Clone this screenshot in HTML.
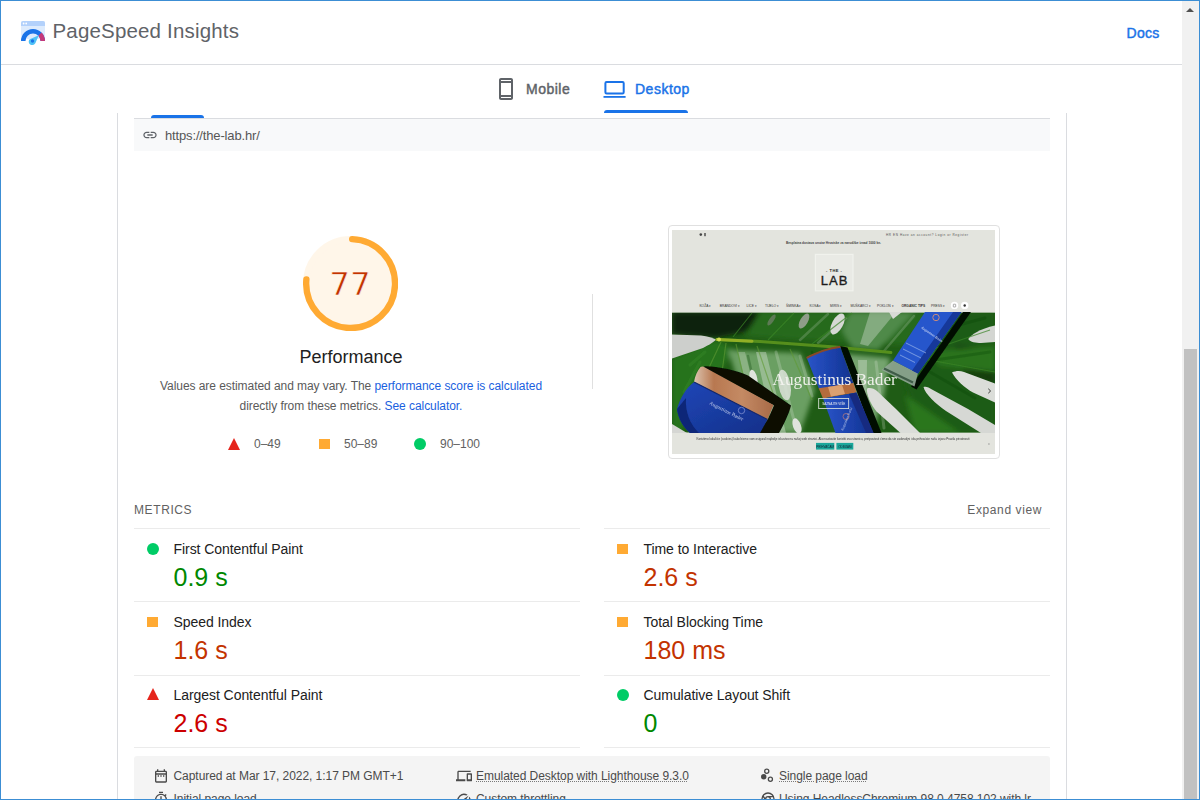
<!DOCTYPE html>
<html lang="en">
<head>
<meta charset="utf-8">
<title>PageSpeed Insights</title>
<style>
html,body{margin:0;padding:0;}
body{width:1200px;height:800px;overflow:hidden;position:relative;background:#fff;font-family:"Liberation Sans",Arial,sans-serif;color:#212121;}
.abs{position:absolute;}
#frame{position:absolute;left:0;top:0;width:1198px;height:798px;border:1px solid #3c8ed4;z-index:50;pointer-events:none;}
/* header */
#hdr-line{left:1px;top:64px;width:1181px;height:1px;background:#dadce0;}
#title{left:52.5px;top:17px;font-size:20.5px;line-height:28px;letter-spacing:0.17px;color:#5f6368;white-space:nowrap;}
#docs{left:1126.5px;top:24px;font-size:14px;line-height:18px;color:#1a73e8;font-weight:normal;-webkit-text-stroke:0.45px currentColor;letter-spacing:0.3px;white-space:nowrap;}
/* tabs */
.tab{font-size:14px;line-height:18px;font-weight:normal;-webkit-text-stroke:0.45px currentColor;letter-spacing:0.5px;white-space:nowrap;}
#t-mobile{left:526px;top:80px;color:#5f6368;}
#t-desktop{left:635px;top:80px;color:#1a73e8;}
#t-underline{left:604px;top:110px;width:84px;height:3px;background:#1a73e8;border-radius:3px 3px 0 0;}
#t-under2{left:151px;top:115px;width:53px;height:3px;background:#1a73e8;border-radius:3px 3px 0 0;}
/* card */
#vl-left{left:117px;top:113px;width:1px;height:687px;background:#dadce0;}
#vl-right{left:1066px;top:113px;width:1px;height:687px;background:#dadce0;}
#urlbar{left:134px;top:118px;width:916px;height:32px;background:#f8f9fa;border-top:1px solid #dadce0;}
#url{left:165px;top:128px;font-size:13px;line-height:16px;letter-spacing:-0.15px;color:#565656;white-space:nowrap;}
/* scrollbar */
#sb-track{left:1182px;top:1px;width:17px;height:798px;background:#f1f1f1;}
#sb-thumb{left:1184px;top:349px;width:13px;height:450px;background:#c1c1c1;}
#sb-arrow{left:1186.4px;top:7.500px;width:0;height:0;border-left:4.200px solid transparent;border-right:4.200px solid transparent;border-bottom:4.500px solid #505050;}

/* gauge */
#gauge{left:302.6px;top:235.9px;width:95.2px;height:95.2px;}
#score{left:302px;top:266px;width:96px;text-align:center;font-family:"DejaVu Sans","Liberation Sans",sans-serif;font-size:32.5px;line-height:36px;color:#c33300;-webkit-text-stroke:0.6px #fff6ea;}
#perf{left:251px;top:346px;width:200px;text-align:center;font-size:18px;line-height:22px;color:#212121;}
#desc{left:134px;top:376px;width:434px;text-align:center;font-size:12px;line-height:20px;color:#5a5a5a;letter-spacing:-0.06px;}
#desc span{color:#1a5fe0;}
.leg{font-size:12px;line-height:14px;color:#616161;white-space:nowrap;}
.tri{width:0;height:0;border-left:6px solid transparent;border-right:6px solid transparent;border-bottom:12px solid #e5251c;}
.sq{width:11.3px;height:10px;background:#fa3;}
.dot{width:12px;height:12px;border-radius:50%;background:#0c6;}
#vdiv{left:592px;top:294px;width:1px;height:95px;background:#e0e0e0;}

/* metrics */
#m-title{left:134px;top:503px;font-size:12px;line-height:14px;letter-spacing:0.6px;color:#616161;white-space:nowrap;}
#m-expand{left:900px;top:503px;width:142px;text-align:right;font-size:12px;line-height:14px;letter-spacing:0.6px;color:#616161;white-space:nowrap;}
.hl{height:1px;background:#ebebeb;width:446px;}
.mt{font-size:14px;line-height:18px;letter-spacing:-0.06px;color:#212121;white-space:nowrap;}
.mv{font-size:25px;line-height:28px;white-space:nowrap;}
.pass{color:#080;} .avg{color:#c33300;} .fail{color:#c00;}

/* footer */
#foot{left:134px;top:756px;width:916px;height:60px;background:#f4f4f4;border-radius:3px;}
.ft{font-size:12px;line-height:14px;color:#4a4a4a;white-space:nowrap;letter-spacing:-0.05px;}
.ft u{text-decoration:underline dotted #7a7a7a;text-decoration-thickness:1px;text-underline-offset:1px;}
.fi{width:16px;height:16px;}

/* screenshot */
#shot-frame{left:667.5px;top:225px;width:332px;height:234px;border:1px solid #e0e0e0;border-radius:4px;background:#fff;box-sizing:border-box;}
#shot{left:672px;top:230px;width:323px;height:224px;}
#shot text{font-family:"Liberation Sans",Arial,sans-serif;}
</style>
</head>
<body>
<svg class="abs" style="left:21px;top:21px;width:24px;height:24px;" viewBox="0 0 24 24">
<path d="M0 2a2 2 0 0 1 2-2h20a2 2 0 0 1 2 2v16H0z" fill="#ddebfd"/>
<path d="M0 2a2 2 0 0 1 2-2h20a2 2 0 0 1 2 2v3H0z" fill="#b3d1fb"/>
<circle cx="2.600" cy="2.500" r="0.9" fill="#fff"/><circle cx="5.200" cy="2.500" r="0.9" fill="#fff"/>
<path d="M0 20A12 12 0 0 1 24 20H19.500A7.500 7.500 0 0 0 4.500 20z" fill="#1a73e8"/>
<path d="M20.490 11.510A12 12 0 0 1 24 20H19.500A7.500 7.500 0 0 0 17.300 14.700z" fill="#c5397a"/>
<path d="M8.700 18.200L17.800 14.200L14.300 22.300A3.500 3.500 0 1 1 8.700 18.200z" fill="#4fc3f7"/>
<circle cx="11.500" cy="20" r="1.700" fill="#1a73e8"/>
</svg>
<svg class="abs" style="left:494px;top:77px;width:24px;height:24px;" viewBox="0 0 24 24"><path fill="#5f6368" d="M17 1.010L7 1c-1.100 0-2 .9-2 2v18c0 1.100.9 2 2 2h10c1.100 0 2-.9 2-2V3c0-1.100-.9-1.990-2-1.990zM17 21H7v-1h10v1zm0-3H7V6h10v12zM7 4V3h10v1H7z"/></svg>
<svg class="abs" style="left:602px;top:79px;width:26px;height:22px;" viewBox="0 0 26 22"><rect x="3.400" y="3" width="18.300" height="11.500" rx="1.200" fill="none" stroke="#1a73e8" stroke-width="2"/><rect x="1.500" y="17" width="22.100" height="1.800" fill="#1a73e8"/></svg>
<div id="hdr-line" class="abs"></div>
<div id="title" class="abs">PageSpeed Insights</div>
<div id="docs" class="abs">Docs</div>
<div id="t-mobile" class="abs tab">Mobile</div>
<div id="t-desktop" class="abs tab">Desktop</div>
<div id="t-underline" class="abs"></div>
<div id="t-under2" class="abs"></div>
<div id="vl-left" class="abs"></div>
<div id="vl-right" class="abs"></div>
<div id="urlbar" class="abs"></div>
<div id="url" class="abs">https://the-lab.hr/</div>
<svg class="abs" style="left:141.5px;top:127px;width:16px;height:16px;" viewBox="0 0 24 24"><path fill="#5f6368" d="M3.900 12c0-1.710 1.390-3.100 3.100-3.100h4V7H7c-2.760 0-5 2.240-5 5s2.240 5 5 5h4v-1.900H7c-1.710 0-3.100-1.390-3.100-3.100zM8 13h8v-2H8v2zm9-6h-4v1.900h4c1.710 0 3.100 1.390 3.100 3.100s-1.390 3.100-3.100 3.100h-4V17h4c2.760 0 5-2.240 5-5s-2.240-5-5-5z"/></svg>
<svg id="gauge" class="abs" viewBox="0 0 120 120">
<circle cx="60" cy="60" r="56" stroke-width="8" fill="#ffaa33" stroke="#ffaa33" opacity="0.1"/>
<circle cx="60" cy="60" r="56" stroke-width="8" fill="none" stroke="#ffaa33" stroke-linecap="round" stroke-dasharray="266.93 351.86" transform="rotate(-87.954 60 60)"/>
</svg>
<div id="score" class="abs">77</div>
<div id="perf" class="abs">Performance</div>
<div id="desc" class="abs">Values are estimated and may vary. The <span>performance score is calculated</span><br>directly from these metrics. <span>See calculator.</span></div>
<div class="abs tri" style="left:228px;top:438px;"></div>
<div class="abs leg" style="left:254px;top:437px;">0–49</div>
<div class="abs sq" style="left:318.5px;top:438.5px;"></div>
<div class="abs leg" style="left:344px;top:437px;">50–89</div>
<div class="abs dot" style="left:414px;top:438px;"></div>
<div class="abs leg" style="left:440px;top:437px;">90–100</div>
<div id="vdiv" class="abs"></div>

<div id="shot-frame" class="abs"></div>
<svg id="shot" class="abs" viewBox="672 230 323 224">
<defs>
<clipPath id="heroclip"><rect x="672" y="312.8" width="323" height="119.8"/></clipPath>
<filter id="soft" x="-5%" y="-5%" width="110%" height="110%"><feGaussianBlur stdDeviation="0.7"/></filter>
<filter id="soft2" x="-20%" y="-20%" width="140%" height="140%"><feGaussianBlur stdDeviation="2.500"/></filter>
<linearGradient id="lid" x1="0" y1="0" x2="1" y2="0"><stop offset="0" stop-color="#dcc4b0"/><stop offset="0.25" stop-color="#b87850"/><stop offset="0.6" stop-color="#c48a64"/><stop offset="1" stop-color="#a86a48"/></linearGradient>
<linearGradient id="jar" x1="0" y1="0" x2="1" y2="1"><stop offset="0" stop-color="#1f47b8"/><stop offset="1" stop-color="#13308a"/></linearGradient>
<linearGradient id="bot" x1="0" y1="0" x2="1" y2="0"><stop offset="0" stop-color="#2a55c8"/><stop offset="0.6" stop-color="#1a3fa8"/><stop offset="1" stop-color="#15328c"/></linearGradient>
<linearGradient id="leaf" x1="0" y1="0" x2="1" y2="1"><stop offset="0" stop-color="#1d4f14"/><stop offset="0.5" stop-color="#2f7420"/><stop offset="1" stop-color="#256418"/></linearGradient>
</defs>
<rect x="672" y="230" width="323" height="224" fill="#e3e4de"/>
<!-- header -->
<circle cx="700.8" cy="234.6" r="1.300" fill="#444"/><rect x="704.3" y="233" width="1.400" height="3.200" fill="#444"/>
<text x="886" y="235.7" font-size="3.100" fill="#555" textLength="82">HR  EN   Have an account?  Login or Register</text>
<text x="786" y="243.8" font-size="3.200" font-weight="bold" fill="#444" textLength="95">Besplatna dostava unutar Hrvatske za narudžbe iznad 1000 kn.</text>
<rect x="815.4" y="254.4" width="37.600" height="36.400" fill="#e9eae5" stroke="#f1f2ed" stroke-width="1.200"/>
<text x="834.2" y="271.7" font-size="4" font-weight="bold" fill="#222" text-anchor="middle" letter-spacing="0.5">- THE -</text>
<text x="834.6" y="284.7" font-size="13" fill="#1c1c1c" stroke="#1c1c1c" stroke-width="0.350" text-anchor="middle" letter-spacing="1.100">LAB</text>
<text x="699.4" y="306.6" font-size="3.300" font-weight="normal" fill="#333">KOŽA ▾</text><text x="719.8" y="306.6" font-size="3.300" font-weight="normal" fill="#333">BRANDOVI ▾</text><text x="746.6" y="306.6" font-size="3.300" font-weight="normal" fill="#333">LICE ▾</text><text x="765" y="306.6" font-size="3.300" font-weight="normal" fill="#333">TIJELO ▾</text><text x="786" y="306.6" font-size="3.300" font-weight="normal" fill="#333">ŠMINKA ▾</text><text x="809.6" y="306.6" font-size="3.300" font-weight="normal" fill="#333">KOSA ▾</text><text x="830" y="306.6" font-size="3.300" font-weight="normal" fill="#333">MIRIS ▾</text><text x="850.4" y="306.6" font-size="3.300" font-weight="normal" fill="#333">MUŠKARCI ▾</text><text x="877" y="306.6" font-size="3.300" font-weight="normal" fill="#333">POKLON ▾</text><text x="901.4" y="306.6" font-size="3.300" font-weight="bold" fill="#333">ORGANIC TIPS</text><text x="931" y="306.6" font-size="3.300" font-weight="normal" fill="#333">PRESS ▾</text>
<circle cx="954.5" cy="305.4" r="3.700" fill="#fff"/><circle cx="964.7" cy="305.4" r="3.700" fill="#fff"/>
<rect x="953.3" y="304.2" width="2.400" height="2.800" rx="0.5" fill="none" stroke="#555" stroke-width="0.5"/><circle cx="964.7" cy="305.5" r="1.200" fill="#333"/>
<g clip-path="url(#heroclip)">
<rect x="672" y="312" width="323" height="122" fill="#1f5c15"/>
<g filter="url(#soft2)">
<path d="M672 312H770L745 332L716 338L672 334z" fill="#0b2207"/>
<path d="M760 312H930L905 345L800 340L745 336z" fill="#266a1a"/>
<path d="M672 358L716 340L735 350L700 400L680 433H672z" fill="#27731a"/>
<path d="M728 350L800 353L815 390L800 433H765L742 395z" fill="#6a9f62"/>
<path d="M846 354L890 358L884 395L872 433H858z" fill="#74a46e"/>
<path d="M850 312H915L878 350L852 348L842 330z" fill="#4f8a48"/>
<path d="M930 312H995V433H930L905 385L918 350z" fill="#1f5c15"/><path d="M955 345L995 350V385L965 375z" fill="#123c0c"/>
<path d="M925 352L995 346V372L940 366z" fill="#2a731d"/>
<path d="M905 395L960 433H915z" fill="#2a761c"/>
</g>
<g filter="url(#soft)">
<path d="M870 312H896L868 346L860 344z" fill="#c4d2c0" opacity="0.45"/>
<path d="M756 352L766 352L786 433H774z" fill="#e2eadf" opacity="0.38"/>
<path d="M738 352L745 352L757 400L750 400z" fill="#c8d8c4" opacity="0.35"/>
<path d="M858 360L867 360L866 433H860z" fill="#d5e0d2" opacity="0.4"/>
<g fill="none" stroke-linecap="round" opacity="0.5">
<path d="M800 340L828 314M818 343L846 318M884 351L914 316" stroke="#b9ccb4" stroke-width="2.500" opacity="0.5"/>
<path d="M776 352L796 428M800 356L812 396M876 362L884 428" stroke="#e6eee3" stroke-width="3" opacity="0.45"/>
<path d="M748 356L762 420M812 352L818 384" stroke="#143f0d" stroke-width="2.500" opacity="0.55"/>
<path d="M935 360L990 352M930 372L975 398M940 330L985 318" stroke="#143f0d" stroke-width="3" opacity="0.5"/>
<path d="M690 365L705 352M684 392L700 362" stroke="#3f9430" stroke-width="3" opacity="0.6"/>
</g>
<!-- grey/white gaps -->
<path d="M672 334.500L701 335.500C708 336.500 713 338 716.500 339.500C712 343 708 345.500 703 348L672 358.500z" fill="#cdcfcc"/>
<path d="M672 424L687 433H672z" fill="#d5d6d3"/>
<ellipse cx="837.5" cy="324" rx="5.500" ry="11.500" transform="rotate(28 837.5 324)" fill="#d6d8d4"/>
<ellipse cx="804" cy="321" rx="3.800" ry="8.500" transform="rotate(30 804 321)" fill="#8f9d89"/>
<ellipse cx="771.5" cy="320" rx="2.300" ry="6.500" transform="rotate(35 771.5 320)" fill="#5d7a55"/>
<path d="M889 312H902L893 319z" fill="#d8dad6"/>
<ellipse cx="753.5" cy="379" rx="3.800" ry="9.500" transform="rotate(-12 753.5 379)" fill="#dfe3dd"/>
<ellipse cx="784.5" cy="385" rx="6" ry="15.500" transform="rotate(-10 784.5 385)" fill="#dde2db" opacity="0.85"/>
<ellipse cx="797" cy="426" rx="4" ry="8" transform="rotate(-20 797 426)" fill="#dfe3dd"/>
<path d="M995 325.500C988 327 981 329.500 976 332.500C971 335.500 968 338 968.500 339.500C970 342 976 343 981 343L995 342z" fill="#d4d6d2"/>
<path d="M952 372.500C956 370.500 960 370.500 964 372L995 383.500V402.500L973 392.500C965 388 956 380 952 372.500z" fill="#dbddd9"/>
<path d="M923.500 387C926 386 929 387.500 932 389.500L968 409L995 425V433H981L946 411C936 404 925 394 923.500 387z" fill="#d6d8d4"/>
<path d="M867 388.500C870 387.500 874 388.500 877 391L896 409L920 433H900.500L876.500 411.500C871 405 866 394 867 388.500z" fill="#dbddd9"/>
<!-- veins -->
<path d="M717 339.500L760 341.500L835 347L891 352.500" stroke="#578f1e" stroke-width="2.800" fill="none" stroke-linecap="round"/>
<path d="M717 339.500L752 341.200" stroke="#92b028" stroke-width="3" fill="none" stroke-linecap="round"/>
<circle cx="719" cy="339.500" r="2" fill="#d0dc50"/>
<path d="M721 342L706 374M726 343L722 372M736 344L745 384M757 346L776 402M790 349L812 400" stroke="#5f9a34" stroke-width="1.200" fill="none" opacity="0.6"/>
<path d="M733 337L752 313M768 340L794 313M812 344L852 313M925 352L990 330M918 358L995 372" stroke="#3a8426" stroke-width="1.100" fill="none" opacity="0.7"/>
<!-- jar shadow -->
<path d="M705 366.200C716 366 738 370.500 748 375.500L791 405.500C789 414 783 426 779 433H758L768 419L774 405.500L703 367.500z" fill="#070f04"/>
<!-- jar -->
<path d="M694 382L767.500 419.500L760 433H690C683 427 678 418 677 409C680 398 686 388 694 382z" fill="url(#jar)"/>
<path d="M700.500 367C702 366 703.500 366.500 705 367.500L773.500 405L767.500 419.500L694 382C695 376 697.500 370.500 700.500 367z" fill="url(#lid)"/>
<path d="M694 382L767.500 419.500" stroke="#10256e" stroke-width="1.200" fill="none"/>
<path d="M677 409C678 418 683 427 690 433H699C690 424 685 412 686 398z" fill="#0f2878"/>
<!-- centre bottle shadow -->
<path d="M840 346L847.500 347.500L881.500 433H872z" fill="#060c03"/>
<!-- centre bottle -->
<path d="M806.600 357.500C816 352 830 347.500 840 346.200L853.500 383.500L819 389z" fill="url(#bot)"/>
<path d="M806.200 357C816 351.500 830 347 840 345.700L840.700 347.700C830 349 816 353.500 806.900 359z" fill="#8a4a28"/>
<path d="M818.700 388.300L853.300 383L856.500 392.500L823 398.500z" fill="#b56c3c"/>
<path d="M828 387L842 384.800L845 394L831 396.500z" fill="#dca070"/>
<path d="M823 398.500L856.500 392.500L873.500 433H835.500z" fill="url(#bot)"/>
<path d="M849 394L866 433H873.500L856.500 392.500z" fill="#122c80"/>
<!-- right bottle shadow -->
<path d="M963 312H971L916.500 389.500L911 386.500z" fill="#060c03"/>
<!-- right bottle -->
<path d="M893 360.500L918 373L914.500 386.500L881.500 370z" fill="#8ea592" opacity="0.92"/>
<path d="M884 368.500L913 382.500" stroke="#3f5c47" stroke-width="2.200" fill="none"/>
<path d="M925 312H961.500L918 373.500L893 360.500z" fill="#2757cc"/>
<path d="M953 312H961.500L918 373.500L912 370.500z" fill="#17389a"/>
<path d="M906 343L926 353M903 349L921 358M900 355L915 362.500" stroke="#9cb4ea" stroke-width="0.7" fill="none"/>
<circle cx="936" cy="317.500" r="3.200" fill="none" stroke="#c98a7a" stroke-width="1"/>
<circle cx="741.500" cy="410.500" r="3.200" fill="none" stroke="#7f8fd0" stroke-width="0.800"/>
<circle cx="846" cy="416.500" r="3" fill="none" stroke="#b07a80" stroke-width="0.800"/>
</g>
<!-- labels on products -->
<text transform="translate(709 404) rotate(27)" font-size="5.200" fill="#c9d2ee" style="font-family:'Liberation Serif',serif">Augustinus Bader</text>
<text transform="translate(843 431) rotate(-68)" font-size="3.500" fill="#c9d2ee" style="font-family:'Liberation Serif',serif">Augustinus Bader</text>
<text transform="translate(921 328) rotate(35)" font-size="3.500" fill="#dfe6fa" style="font-family:'Liberation Serif',serif">Augustinus Bader</text>
<!-- hero title -->
<text x="772.4" y="385.2" font-size="16.500" fill="#f4f4f0" textLength="124.500" lengthAdjust="spacingAndGlyphs" style="font-family:'Liberation Serif',serif" opacity="0.95">Augustinus Bader</text>
<rect x="818.7" y="398.4" width="30" height="10.200" fill="none" stroke="#e6ece4" stroke-width="0.800"/>
<text x="833.7" y="404.7" font-size="3" fill="#f0f0f0" text-anchor="middle">SAZNAJTE VIŠE</text>
<path d="M988.300 388.800L990.600 391L988.300 393.200" stroke="#222" stroke-width="0.900" fill="none"/>
</g>
<!-- cookie bar -->
<text x="696.4" y="440.1" font-size="3" fill="#333" textLength="273">Koristimo kolačiće (cookies) kako bismo vam osigurali najbolje iskustvo na našoj web stranici. Ako nastavite koristiti ovu stranicu, pretpostavit ćemo da ste zadovoljni i da prihvaćate našu izjavu Pravila privatnosti</text>
<rect x="816" y="442.9" width="18.300" height="6.700" fill="#1aa79b"/><rect x="836.4" y="442.9" width="16.900" height="6.700" fill="#1aa79b"/>
<text x="825.1" y="447.5" font-size="3" fill="#123" text-anchor="middle">PRIHVAĆAM</text><text x="844.8" y="447.5" font-size="3" fill="#123" text-anchor="middle">ODBIJAM</text>
<text x="988" y="444.5" font-size="3.500" fill="#888">x</text>
</svg>

<div id="m-title" class="abs">METRICS</div>
<div id="m-expand" class="abs">Expand view</div>
<div class="abs hl" style="left:134px;top:528px;"></div><div class="abs hl" style="left:604px;top:528px;"></div>
<div class="abs hl" style="left:134px;top:601px;"></div><div class="abs hl" style="left:604px;top:601px;"></div>
<div class="abs hl" style="left:134px;top:674.5px;"></div><div class="abs hl" style="left:604px;top:674.5px;"></div>
<div class="abs hl" style="left:134px;top:747.4px;"></div><div class="abs hl" style="left:604px;top:747.4px;"></div>
<div class="abs dot" style="left:147px;top:543px;"></div><div class="abs mt" style="left:173.5px;top:540px;">First Contentful Paint</div><div class="abs mv pass" style="left:173.5px;top:563px;">0.9 s</div>
<div class="abs sq" style="left:147px;top:617.3px;"></div><div class="abs mt" style="left:173.5px;top:613px;">Speed Index</div><div class="abs mv avg" style="left:173.5px;top:636px;">1.6 s</div>
<div class="abs tri" style="left:147px;top:688.2px;"></div><div class="abs mt" style="left:173.5px;top:685.7px;">Largest Contentful Paint</div><div class="abs mv fail" style="left:173.5px;top:708.7px;">2.6 s</div>
<div class="abs sq" style="left:617px;top:544.3px;"></div><div class="abs mt" style="left:643.5px;top:540px;">Time to Interactive</div><div class="abs mv avg" style="left:643.5px;top:563px;">2.6 s</div>
<div class="abs sq" style="left:617px;top:617.3px;"></div><div class="abs mt" style="left:643.5px;top:613px;">Total Blocking Time</div><div class="abs mv avg" style="left:643.5px;top:636px;">180 ms</div>
<div class="abs dot" style="left:617px;top:688.7px;"></div><div class="abs mt" style="left:643.5px;top:685.7px;">Cumulative Layout Shift</div><div class="abs mv pass" style="left:643.5px;top:708.7px;">0</div>

<div id="foot" class="abs"></div>
<svg class="abs fi" style="left:153px;top:767.7px;" viewBox="0 0 24 24"><path fill="#4a4a4a" d="M7 11h2v2H7v-2zm14-5v14c0 1.1-.9 2-2 2H5a2 2 0 01-2-2l.01-14c0-1.100.88-2 1.990-2h1V2h2v2h8V2h2v2h1c1.100 0 2 .9 2 2zM5 8h14V6H5v2zm14 12V10H5v10h14zm-4-7h2v-2h-2v2zm-4 0h2v-2h-2v2z"/></svg>
<div class="abs ft" style="left:173.5px;top:769px;">Captured at Mar 17, 2022, 1:17 PM GMT+1</div>
<svg class="abs fi" style="left:456px;top:767.7px;" viewBox="0 0 24 24"><path fill="#4a4a4a" d="M4 6h18V4H4c-1.100 0-2 .9-2 2v11H0v3h14v-3H4V6zm19 2h-6c-.55 0-1 .45-1 1v10c0 .55.45 1 1 1h6c.55 0 1-.45 1-1V9c0-.55-.45-1-1-1zm-1 9h-4v-7h4v7z"/></svg>
<div class="abs ft" style="left:476px;top:769px;"><u>Emulated Desktop with Lighthouse 9.3.0</u></div>
<svg class="abs fi" style="left:760px;top:768px;" viewBox="0 0 16 16"><circle cx="6.75" cy="3.25" r="2.05" fill="none" stroke="#4a4a4a" stroke-width="1.3"/><circle cx="3.75" cy="8.75" r="2.7" fill="#4a4a4a"/><circle cx="10.4" cy="11.25" r="2.05" fill="none" stroke="#4a4a4a" stroke-width="1.3"/></svg>
<div class="abs ft" style="left:779px;top:769px;"><u>Single page load</u></div>
<svg class="abs fi" style="left:153px;top:790.5px;" viewBox="0 0 24 24"><path fill="#4a4a4a" d="M15 1H9v2h6V1zm-4 13h2V8h-2v6zm8.030-6.610l1.420-1.420c-.43-.51-.9-.99-1.410-1.410l-1.420 1.420A8.962 8.962 0 0012 4c-4.970 0-9 4.030-9 9s4.020 9 9 9a8.994 8.994 0 007.030-14.610zM12 20c-3.870 0-7-3.130-7-7s3.130-7 7-7 7 3.130 7 7-3.130 7-7 7z"/></svg>
<div class="abs ft" style="left:173.5px;top:792px;">Initial page load</div>
<svg class="abs fi" style="left:456px;top:790.5px;" viewBox="0 0 24 24"><path fill="#4a4a4a" d="M20.380 8.570l-1.230 1.850a8 8 0 01-.22 7.580H5.070A8 8 0 0115.580 6.850l1.850-1.230A10 10 0 003.350 19a2 2 0 001.720 1h13.850a2 2 0 001.740-1 10 10 0 00-.27-10.440zm-9.790 6.840a2 2 0 002.830 0l5.660-8.490-8.490 5.660a2 2 0 000 2.830z"/></svg>
<div class="abs ft" style="left:476px;top:792px;"><u>Custom throttling</u></div>
<svg class="abs fi" style="left:760px;top:791px;" viewBox="0 0 24 24"><g fill="none" stroke="#4a4a4a" stroke-width="2"><circle cx="12" cy="12" r="9"/><circle cx="12" cy="12" r="3.5"/><path d="M4.5 7.500L9 14M12 8.500H20.500"/></g></svg>
<div class="abs ft" style="left:779px;top:792px;"><u>Using HeadlessChromium 98.0.4758.102 with lr</u></div>

<div id="sb-track" class="abs"></div>
<div id="sb-thumb" class="abs"></div>
<div id="sb-arrow" class="abs"></div>
<div id="frame"></div>
</body>
</html>
